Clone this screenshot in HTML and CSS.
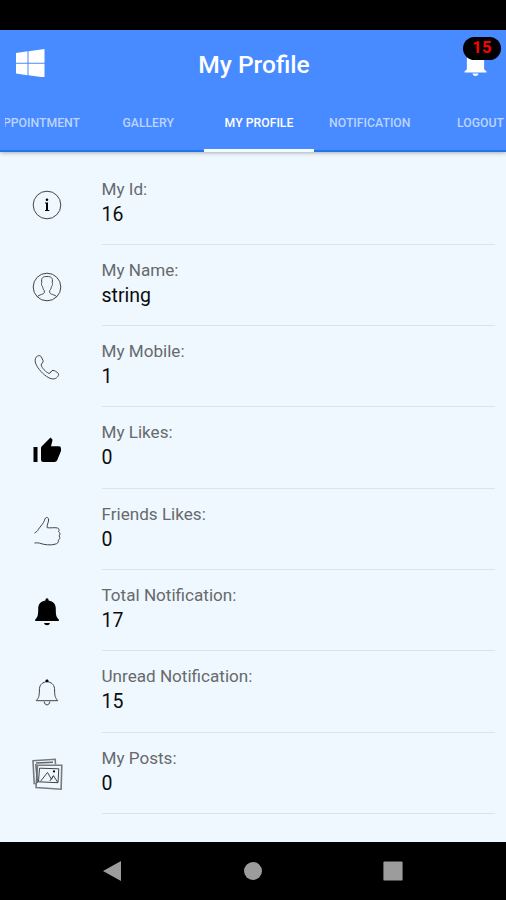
FILE: index.html
```html
<!DOCTYPE html>
<html lang="en">
<head>
<meta charset="utf-8">
<title>My Profile</title>
<link rel="stylesheet" href="styles.css">
</head>
<body>
<div class="status"></div>
<header class="header">
  <div class="toolbar">
    <svg class="logo" viewBox="0 0 28 28"><path d="M0 4 11.3 2.3V13.4H0zM12.3 2.1 28 0V13.4H12.3zM0 14.4H11.3V25.7L0 24zM12.3 14.4H28V28L12.3 25.8z"/></svg>
    <h1 class="title">My Profile</h1>
    <div class="alerts">
      <svg class="alert-bell" viewBox="0 0 24 28"><path d="M3 21V11Q3 4 10 2.5V1H14V2.5Q21 4 21 11V21L23.5 23.5V24.5H.5V23.5zM9 25.5H15Q15 28 12 28T9 25.5z"/></svg>
      <span class="badge">15</span>
    </div>
  </div>
  <nav class="tabs">
    <div class="tab">APPOINTMENT</div>
    <div class="tab">GALLERY</div>
    <div class="tab active">MY PROFILE</div>
    <div class="tab">NOTIFICATION</div>
    <div class="tab">LOGOUT</div>
  </nav>
</header>
<main class="list">
  <div class="row">
    <svg class="icon" viewBox="0 0 30 30"><circle cx="15" cy="15" r="13.8"/><path class="solid" d="M13 12.5H16V20H17.3V21H13V20H14V13.5H13z"/><circle class="solid" cx="15" cy="9.8" r="1.3"/></svg>
    <div class="info"><div class="label">My Id:</div><div class="value">16</div></div>
  </div>
  <div class="row">
    <svg class="icon" viewBox="0 0 30 30"><circle cx="15" cy="15" r="13.8"/><path d="M5.2 24.8C7 22.5 12 22.5 12.3 20.5V18.5C10.8 17 10.8 15.5 10.5 14.5 9.3 13.5 9.2 11.5 9.8 10.8 8.8 5.5 11.2 4.5 15 4.5S21.2 5.5 20.2 10.8C20.8 11.5 20.7 13.5 19.5 14.5 19.2 15.5 19.2 17 17.7 18.5V20.5C18 22.5 23 22.5 24.8 24.8"/></svg>
    <div class="info"><div class="label">My Name:</div><div class="value">string</div></div>
  </div>
  <div class="row">
    <svg class="icon" viewBox="0 0 30 30"><path d="M4.2 4.1C6 2.3 8 2 9.3 4L11 7.4C12 9.7 8.8 10.5 9.2 12.2 9.7 14.8 14 19.3 16.8 20.3 18.8 20.9 18.8 17.3 21 17.3 22 17.3 25.2 19 26.2 20.3 27.6 22.1 25 24.8 23.2 25.6 19.3 27.3 13 23 9 18.5 4.3 13.2 1.5 8 4.2 4.1z"/></svg>
    <div class="info"><div class="label">My Mobile:</div><div class="value">1</div></div>
  </div>
  <div class="row">
    <svg class="icon likes" viewBox="0 0 30 30"><path class="solid" d="M1.5 12H5.5V27H1.5zM9 13Q9 12 10 11L18.5 2.5 20 4Q20.7 4.7 20.4 5.8L19 11.3H27Q29 11.3 29 13.5V16L25.2 25.2Q24.5 27 22.5 27H11.5Q9 27 9 24.5z"/></svg>
    <div class="info"><div class="label">My Likes:</div><div class="value">0</div></div>
  </div>
  <div class="row">
    <svg class="icon" viewBox="0 0 30 30"><path d="M2.5 17C4.5 16 5.5 15 6.5 13.2 8.2 10.5 11.5 7.5 12.6 4.2 13 0.5 16.8 0.6 16.6 4 16.5 7 14.5 9.3 15.2 11.7 18 12.3 22.5 11.2 25.5 12 27.5 12.6 27.3 14.8 26.5 15.6 28.5 16.6 28.3 19.2 27 19.9 28.4 21.4 27.8 23.6 26.2 24.2 27 26.6 25.3 27.6 23 28.2 18.5 29.6 12 28.6 9 27.6 7 26.7 5 26.8 2.5 27"/></svg>
    <div class="info"><div class="label">Friends Likes:</div><div class="value">0</div></div>
  </div>
  <div class="row">
    <svg class="icon" viewBox="0 0 30 30"><path class="solid" d="M13.4 3.4Q13.4 1.3 15 1.3T16.6 3.4C21.5 4.2 23.8 7.2 23.8 11.5 23.8 17 24 20 26.8 22.6V24H3.2V22.6C6 20 6.2 17 6.2 11.5 6.2 7.2 8.5 4.2 13.4 3.4zM12 26H18Q17.5 28.3 15 28.3T12 26z"/></svg>
    <div class="info"><div class="label">Total Notification:</div><div class="value">17</div></div>
  </div>
  <div class="row">
    <svg class="icon" viewBox="0 0 30 30"><path d="M13.6 4Q13.6 2.2 15 2.2T16.4 4C20.5 4.8 22.6 7.5 22.6 12 22.6 18 23.2 19.8 25.8 22.7H4.2C6.8 19.8 7.4 18 7.4 12 7.4 7.5 9.5 4.8 13.6 4zM12.2 23.5C12.5 28 17.5 28 17.8 23.5"/><circle class="solid" cx="15" cy="3" r="1.4"/></svg>
    <div class="info"><div class="label">Unread Notification:</div><div class="value">15</div></div>
  </div>
  <div class="row">
    <svg class="icon photos" viewBox="0 0 30 30"><path class="frame" d="M23.5 5.3 23.2.3 1 1.8 2.2 24.5 4.3 24.8M5.5 6.2H29.8L29.1 30.2 4 28.5z"/><path class="shade" d="M3.8 5 5.5 24M4 4 21 3.2"/><path d="M7.5 9.2 26.8 9.8 26 23.7 6.5 22.8zM8.5 22.3 15.5 13.5 19.5 20.3 21.5 16.7 25.5 23M17.8 22 21.5 16.7"/><circle class="solid" cx="22" cy="12.4" r="1.1"/></svg>
    <div class="info"><div class="label">My Posts:</div><div class="value">0</div></div>
  </div>
</main>
<footer class="navbar">
  <svg class="nav-icon back" viewBox="0 0 20 22"><path d="M19 1V21L1 11z"/></svg>
  <svg class="nav-icon" viewBox="0 0 20 22"><circle cx="10" cy="11" r="9"/></svg>
  <svg class="nav-icon" viewBox="0 0 20 22"><rect x=".4" y="1.4" width="19.2" height="19.2" rx="1.2"/></svg>
</footer>
</body>
</html>
```
FILE: styles.css
```css
* { box-sizing: border-box; }
body {
  margin: 0;
  width: 506px;
  height: 900px;
  display: flex;
  flex-direction: column;
  overflow: hidden;
  background: #f0f8ff;
  font-family: Roboto, "Liberation Sans", sans-serif;
}
.status { height: 29.5px; background: #000; flex: none; }
.header {
  height: 122.5px;
  flex: none;
  background: #488aff;
  box-shadow: 0 1px 4px rgba(0, 0, 0, .3);
}
.toolbar {
  height: 68.5px;
  padding: 0 5px 0 16px;
  display: grid;
  grid-template-columns: 43px 1fr 38px;
  align-items: center;
}
.logo { width: 28.5px; height: 28.5px; fill: #fff; margin-bottom: 2px; }
.title {
  margin: 2px 0 0;
  padding-right: 14px;
  text-align: center;
  color: #fff;
  font-size: 24.6px;
  font-weight: 500;
}
.alerts { position: relative; width: 38px; height: 54px; }
.alert-bell {
  display: block;
  width: 23px;
  height: 27px;
  fill: #fff;
  margin: 12px 0 0 1px;
}
.badge {
  position: absolute;
  top: 0;
  left: 0;
  width: 38px;
  height: 23.5px;
  border-radius: 12px;
  background: #000;
  color: #f00;
  font-size: 16.5px;
  font-weight: 700;
  line-height: 22.5px;
  text-align: center;
  letter-spacing: .4px;
}
.tabs {
  height: 54px;
  padding-left: 4px;
  display: flex;
  box-shadow: inset 0 -2px #2473ec;
  overflow: hidden;
}
.tab {
  width: 110.8px;
  height: 54px;
  flex: none;
  line-height: 50px;
  text-align: center;
  color: #bcd4ff;
  font-size: 12.25px;
  font-weight: 500;
  border-bottom: 3px solid transparent;
  white-space: nowrap;
}
.tab:first-child { margin-left: -22px; clip-path: inset(0 0 0 23px); }
.tab.active { color: #fff; border-bottom-color: #f4faff; }
.list { flex: 1; padding: 11.5px 11px 0 0; }
.row {
  height: 81.3px;
  display: grid;
  grid-template-columns: 101.5px 1fr;
  align-items: center;
}
.icon {
  width: 30px;
  height: 30px;
  margin: 2.5px 0 0 32px;
  overflow: visible;
  fill: none;
  stroke: #414548;
  stroke-width: 1;
}
.icon.likes { margin-top: 4px; }
.icon .solid { fill: #000; stroke: none; }
.photos .frame { stroke: #777c80; stroke-width: 1.6; }
.photos .shade { stroke: #60666a; stroke-width: 1.5; }
.info {
  height: 81.3px;
  padding-top: 13px;
  border-bottom: 1.5px solid #dce3e9;
}
.label { font-size: 17.1px; line-height: 24px; color: #666a6d; }
.value { font-size: 19.5px; line-height: 28px; color: #0b0c0d; }
.navbar {
  height: 58.5px;
  flex: none;
  padding: 0 103px;
  display: flex;
  justify-content: space-between;
  align-items: center;
  background: #000;
}
.nav-icon { width: 20px; height: 22px; fill: #9c9c9c; }
.nav-icon.back { margin-left: -1px; }
```
